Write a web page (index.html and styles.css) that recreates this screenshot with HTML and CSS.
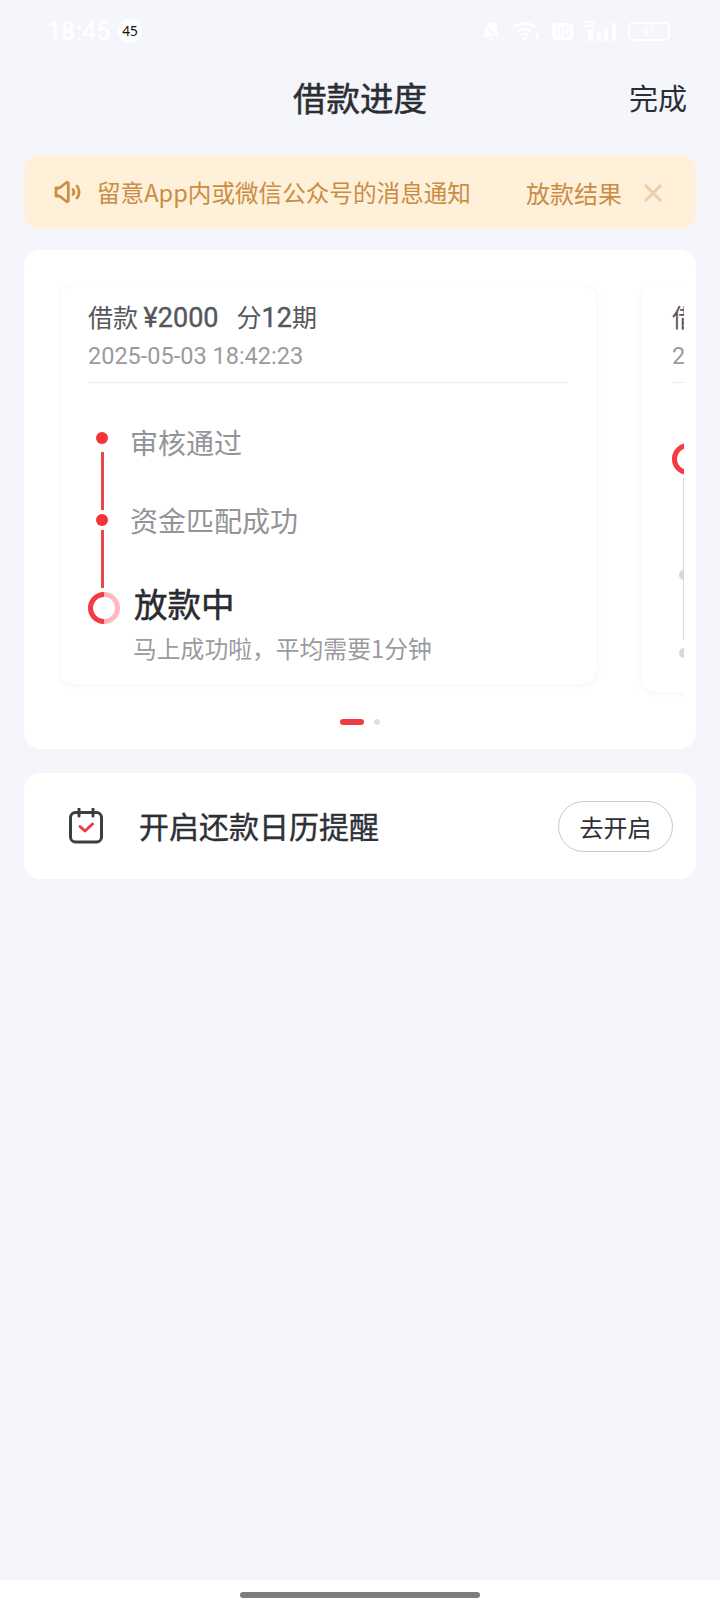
FILE: index.html
```html
<!DOCTYPE html>
<html lang="zh-CN">
<head>
<meta name="viewport" content="width=device-width, initial-scale=1.0">
<meta charset="utf-8">
<title>借款进度</title>
<link rel="stylesheet" href="styles.css">
</head>
<body>
<!-- status bar -->
<div class="statusbar">
  <span class="clock">18:45</span>
  <span class="badge">45</span>
  <div class="status-icons">
    <svg width="20" height="20" viewBox="0 0 20 20"><path d="M10 1c-3.500 0-6 2.500-6 6v5l-2.500 3.500h17L16 12V7c0-3.500-2.500-6-6-6z" fill="#fff"/><path d="M7.500 17h5c-.3 1.500-1.200 2.500-2.500 2.500S7.800 18.500 7.500 17z" fill="#fff"/><path d="M1.500 1.500l17 17" stroke="#f4f6fb" stroke-width="2"/></svg>
    <svg width="27" height="20" viewBox="0 0 27 20" fill="none" stroke="#fff" stroke-width="2.600"><path d="M1 6.500c6-5.500 15-5.500 21 0"/><path d="M4.500 10.500c4-3.500 10-3.500 14 0"/><path d="M8 14.500c2.200-2 4.800-2 7 0"/><circle cx="11.500" cy="18" r="1" fill="#fff"/><path d="M24 12v5M24 18.500v1"/></svg>
    <svg width="21" height="20" viewBox="0 0 21 20"><rect x="0" y="2" width="21" height="17" rx="3" fill="#fff"/><path d="M5 6v9M9 6v9M13 6v9h2.500c1.500 0 2-1 2-4.500S17 6 15.500 6z" stroke="#f4f6fb" stroke-width="1.500" fill="none"/></svg>
    <svg width="31" height="20" viewBox="0 0 31 20" fill="#fff"><rect x="0" y="0" width="10" height="2"/><rect x="0" y="4" width="10" height="2"/><rect x="3" y="9" width="5" height="11"/><rect x="12" y="12" width="4" height="8"/><rect x="19" y="7" width="4" height="13"/><rect x="27" y="2" width="4" height="18"/></svg>
    <div class="battery">91</div>
  </div>
</div>

<!-- title -->
<div class="navbar">
  <h1 class="nav-title">借款进度</h1>
  <a class="nav-done">完成</a>
</div>

<div class="content">
  <!-- notice -->
  <div class="notice">
    <svg class="notice-icon" width="28" height="24" viewBox="0 0 28 24" fill="none" stroke="#cb8f48" stroke-width="2.800" stroke-linejoin="round" stroke-linecap="round"><path d="M2 8h3.500L12.500 2.500c1-.6 1.800 0 1.800 1v17c0 1-.8 1.600-1.800 1L5.500 16H2z"/><path d="M19 9.500c1.200 1.500 1.200 3.500 0 5"/><path d="M23 6c2.800 3.500 2.800 8.500 0 12"/></svg>
    <span class="notice-text">留意App内或微信公众号的消息通知</span>
    <span class="notice-link">放款结果</span>
    <svg class="notice-close" width="20" height="20" viewBox="0 0 20 20" stroke="#ecceab" stroke-width="3" fill="none"><path d="M2 2l16 16M18 2L2 18"/></svg>
  </div>

  <!-- progress cards -->
  <div class="progress-panel">
    <div class="slider">
      <div class="loan-card">
        <div class="loan-head">
          <div class="loan-title">借款 <b>¥2000</b><span class="loan-terms">分<b>12</b>期</span></div>
          <div class="loan-date">2025-05-03 18:42:23</div>
        </div>
        <div class="timeline">
          <div class="rail">
            <span class="dot"></span>
            <span class="line line-first"></span>
            <span class="dot"></span>
            <span class="line"></span>
            <svg class="ring" width="32" height="32" viewBox="0 0 32 32" fill="none" stroke-width="5"><circle cx="16" cy="16" r="13.500" stroke="#fdb9bc"/><path d="M16 2.500a13.500 13.500 0 0 0 0 27" stroke="#f43b40"/></svg>
          </div>
          <div class="steps">
            <div class="step">审核通过</div>
            <div class="step step-two">资金匹配成功</div>
            <div class="step-now">放款中</div>
            <div class="step-note">马上成功啦，平均需要1分钟</div>
          </div>
        </div>
      </div>
      <div class="loan-card loan-card-next">
        <div class="loan-head">
          <div class="loan-title">借款 <b>¥2000</b></div>
          <div class="loan-date">2025-05-03</div>
        </div>
        <div class="timeline-next">
          <svg width="32" height="32" viewBox="0 0 32 32" fill="none" stroke-width="5"><circle cx="16" cy="16" r="13.500" stroke="#fdb9bc"/><path d="M16 2.500a13.500 13.500 0 0 0 0 27" stroke="#f43b40"/></svg>
          <span class="grey-line"></span>
          <span class="grey-dot grey-dot-one"></span>
          <span class="grey-dot grey-dot-two"></span>
        </div>
      </div>
    </div>
    <div class="pager">
      <span class="pager-on"></span>
      <span class="pager-off"></span>
    </div>
  </div>

  <!-- calendar reminder -->
  <div class="reminder">
    <svg class="reminder-icon" width="34" height="36" viewBox="0 0 34 36" fill="none"><rect x="1.500" y="4.500" width="31" height="29.500" rx="5" stroke="#3c3e46" stroke-width="3"/><path d="M10 1v7M24 1v7" stroke="#3c3e46" stroke-width="3" stroke-linecap="round"/><path d="M11 18.500l5 4.500 7.500-7" stroke="#ec3b47" stroke-width="3" stroke-linecap="round" stroke-linejoin="round"/></svg>
    <span class="reminder-text">开启还款日历提醒</span>
    <button class="reminder-btn">去开启</button>
  </div>
</div>

<div class="homebar"><span class="home-pill"></span></div>
</body>
</html>
```

FILE: styles.css
```css
* {
  box-sizing: border-box;
}
body {
  margin: 0;
  width: 720px;
  height: 1612px;
  display: flex;
  flex-direction: column;
  background-color: #f4f6fb;
  font-family: "Noto Sans CJK SC", "Noto Sans", sans-serif;
  overflow: hidden;
}

/* status bar */
.statusbar {
  height: 62px;
  padding: 0 50px 0 47px;
  display: flex;
  align-items: center;
  color: #fff;
}
.clock {
  font-family: Roboto, sans-serif;
  font-size: 25px;
  font-weight: 500;
  width: 71px;
}
.badge {
  width: 24px;
  height: 24px;
  border-radius: 50%;
  background-color: #fff;
  color: #111;
  font-family: "Noto Sans", sans-serif;
  font-size: 13.500px;
  line-height: 24px;
  text-align: center;
}
.status-icons {
  margin-left: auto;
  display: flex;
  align-items: center;
  gap: 12px;
}
.battery {
  width: 42px;
  height: 19px;
  border: 2px solid #fff;
  border-radius: 5px;
  font-family: Roboto, sans-serif;
  font-size: 13px;
  line-height: 15px;
  text-align: center;
}

/* title */
.navbar {
  height: 75px;
  padding: 0 33px 6px 293px;
  display: flex;
  align-items: center;
  justify-content: space-between;
}
.nav-title {
  margin: 0;
  font-size: 33.500px;
  font-weight: 400;
  -webkit-text-stroke: 0.5px #2c2e35;
  color: #2c2e35;
}
.nav-done {
  font-size: 29px;
  color: #2c2e35;
}

.content {
  flex: 1;
  padding: 18px 24px 0;
}

/* notice */
.notice {
  height: 74px;
  padding: 0 30px;
  display: flex;
  align-items: center;
  background-color: #fff0d9;
  border-radius: 14px;
  color: #c98d45;
  font-size: 24px;
}
.notice-icon {
  margin-right: 15px;
}
.notice-text {
  width: 429px;
  font-size: 23.600px;
}
.notice-link {
  width: 117px;
}
.notice-close {
  margin-top: 1px;
}

/* progress cards */
.progress-panel {
  margin-top: 21px;
  height: 499px;
  padding: 34px 0 0 35px;
  background-color: #fff;
  border-radius: 16px;
}
.slider {
  width: 625px;
  height: 426px;
  display: flex;
  align-items: flex-start;
  gap: 44px;
  overflow: hidden;
}
.loan-card {
  flex: none;
  width: 538px;
  height: 401px;
  padding: 0 29px 0 28px;
  background-color: #fff;
  border: 1px solid #fafafb;
  border-radius: 14px;
  box-shadow: 0 1px 6px rgba(40, 50, 80, 0.04);
}
.loan-card-next {
  height: 409px;
  padding-left: 30px;
}
.loan-head {
  height: 98px;
  padding-top: 13px;
  border-bottom: 1px solid #ececee;
}
.loan-title {
  font-size: 25px;
  line-height: 36px;
  color: #55575d;
}
.loan-title b {
  font-family: Roboto, sans-serif;
  font-weight: 400;
  -webkit-text-stroke: 0.4px #55575d;
  font-size: 27px;
}
.loan-terms {
  margin-left: 18px;
}
.loan-date {
  margin-top: 1px;
  font-family: Roboto, sans-serif;
  font-size: 23.500px;
  line-height: 38px;
  color: #9a9b9f;
}
.timeline {
  display: flex;
}
.rail {
  width: 46px;
  padding-top: 49px;
  display: flex;
  flex-direction: column;
  align-items: flex-start;
  flex: none;
}
.dot {
  width: 12px;
  height: 12px;
  margin-left: 8px;
  border-radius: 50%;
  background-color: #f43338;
}
.line {
  width: 3px;
  height: 58px;
  margin: 4px 0 4px 12.500px;
  background-color: #e8474c;
}
.line-first {
  margin-top: 8px;
}
.steps {
  display: flex;
  flex-direction: column;
  padding-top: 37px;
}
.step {
  margin-left: -4px;
  font-size: 28px;
  line-height: 44px;
  color: #939498;
}
.step-two {
  margin-top: 34px;
}
.step-now {
  margin-top: 36px;
  font-size: 33.500px;
  font-weight: 400;
  -webkit-text-stroke: 0.5px #2a2b30;
  line-height: 50px;
  color: #2a2b30;
}
.step-note {
  margin-top: 3px;
  margin-left: -1px;
  font-size: 23.800px;
  line-height: 34px;
  color: #9a9b9f;
}

/* next card, cut off by the slider */
.timeline-next {
  position: relative;
  padding-top: 60px;
}
.grey-line {
  position: absolute;
  left: 11px;
  top: 95px;
  width: 1px;
  height: 162px;
  background-color: #dcdcdf;
}
.grey-dot {
  position: absolute;
  left: 7px;
  width: 10px;
  height: 10px;
  border-radius: 50%;
  background-color: #d8d8da;
}
.grey-dot-one {
  top: 187px;
}
.grey-dot-two {
  top: 265px;
}

.pager {
  margin-top: 9px;
  padding-left: 281px;
  display: flex;
  align-items: center;
  gap: 10px;
}
.pager-on {
  width: 24px;
  height: 6px;
  border-radius: 3px;
  background-color: #ee3d42;
}
.pager-off {
  width: 6px;
  height: 6px;
  border-radius: 50%;
  background-color: #dfdfe2;
}

/* calendar reminder */
.reminder {
  margin-top: 24px;
  height: 106px;
  padding: 0 23px 0 45px;
  display: flex;
  align-items: center;
  background-color: #fff;
  border-radius: 16px;
}
.reminder-text {
  margin-left: 36px;
  margin-bottom: 2px;
  font-size: 30px;
  font-weight: 400;
  -webkit-text-stroke: 0.4px #2e3036;
  color: #2e3036;
}
.reminder-btn {
  margin-left: auto;
  width: 115px;
  height: 51px;
  padding: 0;
  background-color: #fff;
  border: 1px solid #c9c9cc;
  border-radius: 26px;
  font-family: inherit;
  font-size: 24px;
  color: #2e3036;
}

/* home indicator */
.homebar {
  height: 32px;
  padding-top: 12px;
  display: flex;
  justify-content: center;
  background-color: #fff;
}
.home-pill {
  width: 240px;
  height: 6px;
  border-radius: 3px;
  background-color: #7d7d7d;
}
```
